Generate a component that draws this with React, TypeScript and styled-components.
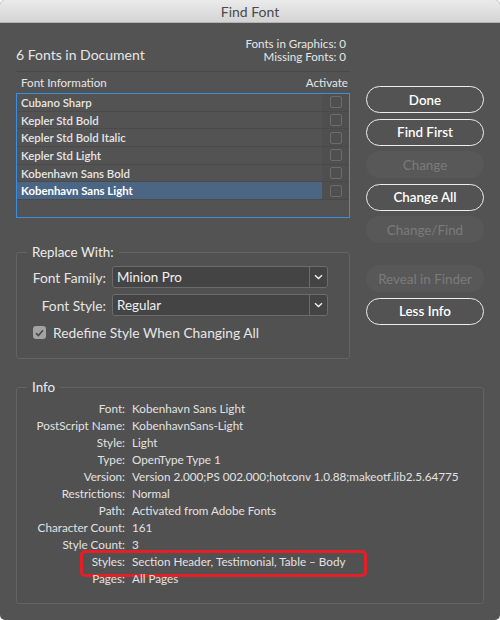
import React from "react";
import styled, { createGlobalStyle } from "styled-components";

const Global = createGlobalStyle`
  html, body { margin: 0; padding: 0; background: #ffffff; }
  body { font-family: "Lato", "Open Sans", sans-serif; -webkit-font-smoothing: antialiased; }
  * { box-sizing: border-box; }
`;

const Window = styled.div`
  width: 500px;
  height: 620px;
  background: #535353;
  border-radius: 5px;
  overflow: hidden;
  display: flex;
  flex-direction: column;
  color: #e6e6e6;
`;

const TitleBar = styled.div`
  height: 23px;
  flex: none;
  background: linear-gradient(#ebebeb, #d4d4d4);
  border-bottom: 1px solid #b4b4b4;
  display: flex;
  align-items: center;
  justify-content: center;
  font-size: 14px;
  color: #4a4a4a;
`;

const Content = styled.div`
  padding: 0 16px;
  display: flex;
  flex-direction: column;
`;

const TopRow = styled.div`
  display: flex;
  gap: 16px;
`;

const LeftCol = styled.div`
  width: 334px;
  display: flex;
  flex-direction: column;
`;

const RightCol = styled.div`
  width: 118px;
  padding-top: 63px;
  display: flex;
  flex-direction: column;
  gap: 5.5px;
`;

const Header = styled.div`
  height: 49px;
  display: flex;
  justify-content: space-between;
  align-items: flex-end;
  padding: 0 4px 8px 0;
  border-bottom: 1px solid #4a4a4a;
`;

const DocCount = styled.div`
  font-size: 14px;
  line-height: 16px;
`;

const Stats = styled.div`
  font-size: 11.6px;
  line-height: 13px;
  text-align: right;
`;

const ListHeader = styled.div`
  height: 21px;
  display: flex;
  justify-content: space-between;
  align-items: center;
  padding: 0 2px 0 5px;
  font-size: 11.6px;
`;

const ListBox = styled.div`
  height: 125px;
  border: 1px solid #3a8fe2;
  display: flex;
  flex-direction: column;
`;

const Row = styled.div<{ $selected?: boolean }>`
  height: 17.7px;
  flex: none;
  display: flex;
  border-bottom: 1px solid #4a4a4a;
  background: ${(p) => (p.$selected ? "#4b6684" : "transparent")};
  font-size: 11.4px;
  font-weight: ${(p) => (p.$selected ? 700 : 600)};
  color: ${(p) => (p.$selected ? "#ffffff" : "#e6e6e6")};
`;

const RowName = styled.div`
  flex: 1;
  display: flex;
  align-items: center;
  padding-left: 4px;
`;

const CheckCell = styled.div`
  width: 27px;
  flex: none;
  display: flex;
  align-items: center;
  justify-content: center;
  background: #4f4f4f;
`;

const EmptyBox = styled.span`
  width: 12px;
  height: 12px;
  border: 1px solid #6c6c6c;
  border-radius: 2px;
`;

const Group = styled.fieldset<{ $top: number }>`
  margin: ${(p) => p.$top}px 0 0 0;
  padding: 0;
  border: 1px solid #636363;
  border-radius: 3px;
  background: #515151;
  min-width: 0;
`;

const Legend = styled.legend`
  margin-left: 10px;
  padding: 0 5px;
  font-size: 13.4px;
  line-height: 14px;
  color: #ececec;
`;

const ReplaceBody = styled.div`
  display: grid;
  grid-template-columns: 89px 216px;
  column-gap: 6px;
  row-gap: 6px;
  align-items: center;
  padding: 7px 0 17px 0;
`;

const FieldLabel = styled.div`
  text-align: right;
  font-size: 13.8px;
`;

const Select = styled.div`
  height: 22px;
  display: flex;
  background: #444444;
  border: 1px solid #6b6b6b;
  border-radius: 3px;
  font-size: 13.4px;
`;

const SelectValue = styled.div`
  flex: 1;
  display: flex;
  align-items: center;
  padding-left: 4px;
  color: #f0f0f0;
`;

const SelectArrow = styled.div`
  width: 18px;
  display: flex;
  align-items: center;
  justify-content: center;
  border-left: 1px solid #6b6b6b;
`;

const CheckRow = styled.label`
  grid-column: 1 / span 2;
  display: flex;
  align-items: center;
  gap: 7px;
  padding-left: 16px;
  margin-top: 2px;
  font-size: 13.8px;
`;

const CheckedBox = styled.span`
  width: 13px;
  height: 13px;
  border-radius: 3px;
  background: #a3a3a3;
  display: flex;
  align-items: center;
  justify-content: center;
`;

const Button = styled.div<{ $disabled?: boolean; $gap?: boolean }>`
  height: 27px;
  border-radius: 13.5px;
  display: flex;
  align-items: center;
  justify-content: center;
  font-size: 13.4px;
  margin-top: ${(p) => (p.$gap ? "16.5px" : "0")};
  border: ${(p) => (p.$disabled ? "1.5px solid transparent" : "1.5px solid #ededed")};
  background: ${(p) => (p.$disabled ? "#585858" : "#535353")};
  color: ${(p) => (p.$disabled ? "#7b7b7b" : "#ffffff")};
  font-weight: ${(p) => (p.$disabled ? 400 : 600)};
`;

const InfoBody = styled.div`
  display: flex;
  flex-direction: column;
  padding: 5px 0 17px 0;
`;

const InfoRow = styled.div<{ $highlight?: boolean }>`
  position: relative;
  display: grid;
  grid-template-columns: 108px 1fr;
  column-gap: 7px;
  height: 17px;
  align-items: center;
  font-size: 11.7px;
  color: #e2e2e2;
  &::after {
    content: "";
    display: ${(p) => (p.$highlight ? "block" : "none")};
    position: absolute;
    left: 63px;
    top: -2px;
    width: 281px;
    height: 21px;
    border: 3px solid #e51f26;
    border-radius: 5px;
  }
`;

const InfoLabel = styled.div`
  text-align: right;
`;

const InfoValue = styled.div`
  white-space: nowrap;
`;

const fonts = [
  "Cubano Sharp",
  "Kepler Std Bold",
  "Kepler Std Bold Italic",
  "Kepler Std Light",
  "Kobenhavn Sans Bold",
  "Kobenhavn Sans Light",
];

const info: [string, string][] = [
  ["Font:", "Kobenhavn Sans Light"],
  ["PostScript Name:", "KobenhavnSans-Light"],
  ["Style:", "Light"],
  ["Type:", "OpenType Type 1"],
  ["Version:", "Version 2.000;PS 002.000;hotconv 1.0.88;makeotf.lib2.5.64775"],
  ["Restrictions:", "Normal"],
  ["Path:", "Activated from Adobe Fonts"],
  ["Character Count:", "161"],
  ["Style Count:", "3"],
  ["Styles:", "Section Header, Testimonial, Table – Body"],
  ["Pages:", "All Pages"],
];

const Chevron = () => (
  <svg width="9" height="6" viewBox="0 0 9 6">
    <path d="M1 1.2 L4.5 4.5 L8 1.2" fill="none" stroke="#f2f2f2" strokeWidth="1.4" />
  </svg>
);

export default function App() {
  return (
    <>
      <Global />
      <Window>
        <TitleBar>Find Font</TitleBar>
        <Content>
          <TopRow>
            <LeftCol>
              <Header>
                <DocCount>6 Fonts in Document</DocCount>
                <Stats>
                  <div>Fonts in Graphics: 0</div>
                  <div>Missing Fonts: 0</div>
                </Stats>
              </Header>
              <ListHeader>
                <span>Font Information</span>
                <span>Activate</span>
              </ListHeader>
              <ListBox>
                {fonts.map((f, i) => (
                  <Row key={f} $selected={i === fonts.length - 1}>
                    <RowName>{f}</RowName>
                    <CheckCell>
                      <EmptyBox />
                    </CheckCell>
                  </Row>
                ))}
              </ListBox>
              <Group $top={27}>
                <Legend>Replace With:</Legend>
                <ReplaceBody>
                  <FieldLabel>Font Family:</FieldLabel>
                  <Select>
                    <SelectValue>Minion Pro</SelectValue>
                    <SelectArrow>
                      <Chevron />
                    </SelectArrow>
                  </Select>
                  <FieldLabel>Font Style:</FieldLabel>
                  <Select>
                    <SelectValue>Regular</SelectValue>
                    <SelectArrow>
                      <Chevron />
                    </SelectArrow>
                  </Select>
                  <CheckRow>
                    <CheckedBox>
                      <svg width="9" height="8" viewBox="0 0 9 8">
                        <path d="M1 4.2 L3.4 6.5 L8 1.2" fill="none" stroke="#4a4a4a" strokeWidth="1.6" />
                      </svg>
                    </CheckedBox>
                    Redefine Style When Changing All
                  </CheckRow>
                </ReplaceBody>
              </Group>
            </LeftCol>
            <RightCol>
              <Button>Done</Button>
              <Button>Find First</Button>
              <Button $disabled>Change</Button>
              <Button>Change All</Button>
              <Button $disabled>Change/Find</Button>
              <Button $disabled $gap>Reveal in Finder</Button>
              <Button>Less Info</Button>
            </RightCol>
          </TopRow>
          <Group $top={21}>
            <Legend>Info</Legend>
            <InfoBody>
              {info.map(([k, v]) => (
                <InfoRow key={k} $highlight={k === "Styles:"}>
                  <InfoLabel>{k}</InfoLabel>
                  <InfoValue>{v}</InfoValue>
                </InfoRow>
              ))}
            </InfoBody>
          </Group>
        </Content>
      </Window>
    </>
  );
}
